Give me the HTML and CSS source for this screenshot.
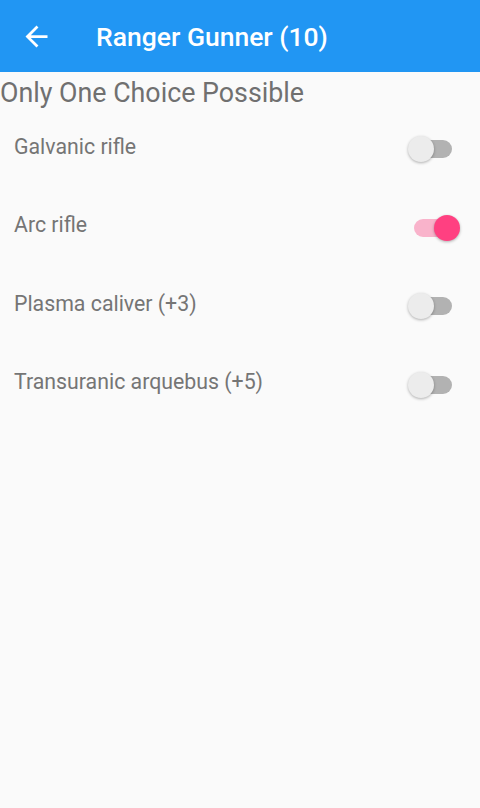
FILE: index.html
```html
<!DOCTYPE html>
<html lang="en">
<head>
  <meta charset="UTF-8" />
  <meta name="viewport" content="width=device-width, initial-scale=1.0" />
  <title>Ranger Gunner (10)</title>
  <link rel="stylesheet" href="styles.css">
</head>
<body>
  <header class="app-bar">
    <button class="back-btn" aria-label="Back">
      <svg viewBox="0 0 24 24" width="33" height="33"><path fill="#fff" d="M20 11H7.83l5.59-5.59L12 4l-8 8 8 8 1.41-1.41L7.83 13H20v-2z"/></svg>
    </button>
    <h1 class="title">Ranger Gunner (10)</h1>
  </header>

  <h2 class="subtitle">Only One Choice Possible</h2>

  <ul class="choices">
    <li class="choice">
      <span class="label">Galvanic rifle</span>
      <span class="switch"><span class="track"></span><span class="thumb"></span></span>
    </li>
    <li class="choice">
      <span class="label">Arc rifle</span>
      <span class="switch on"><span class="track"></span><span class="thumb"></span></span>
    </li>
    <li class="choice">
      <span class="label">Plasma caliver (+3)</span>
      <span class="switch"><span class="track"></span><span class="thumb"></span></span>
    </li>
    <li class="choice">
      <span class="label">Transuranic arquebus (+5)</span>
      <span class="switch"><span class="track"></span><span class="thumb"></span></span>
    </li>
  </ul>
</body>
</html>
```

FILE: styles.css
```css
body {
  margin: 0;
  background-color: #fafafa;
  font-family: Roboto, "Noto Sans", sans-serif;
  color: #757575;
}
.app-bar {
  height: 72px;
  background-color: #2196f3;
  display: flex;
  align-items: center;
  color: #fff;
}
.back-btn {
  width: 33px;
  height: 33px;
  margin-left: 20px;
  padding: 0;
  border: none;
  background: none;
  display: flex;
}
.title {
  margin: 0 0 0 43px;
  font-size: 26.5px;
  font-weight: 500;
}
.subtitle {
  margin: 0;
  padding-top: 5px;
  font-size: 26.8px;
  font-weight: 400;
  line-height: 32px;
  color: #707070;
}
.choices {
  list-style: none;
  margin: 0;
  padding: 0;
}
.choice {
  height: 78.5px;
  display: flex;
  align-items: center;
  justify-content: space-between;
  padding: 0 26px 0 14px;
}
.choice:first-child {
  margin-top: -2px;
}
.label {
  font-size: 21.3px;
}
.switch {
  position: relative;
  width: 46px;
  height: 26px;
  margin-top: 6px;
}
.track {
  position: absolute;
  left: 6px;
  top: 4px;
  width: 38px;
  height: 18px;
  border-radius: 9px;
  background-color: #b2b2b2;
}
.thumb {
  position: absolute;
  left: 0;
  top: 0;
  width: 26px;
  height: 26px;
  border-radius: 50%;
  background-color: #ececec;
  box-shadow: 0 1px 3px rgba(0, 0, 0, 0.3);
}
.switch.on .track {
  background-color: #f9b3cb;
}
.switch.on .thumb {
  left: 26px;
  background-color: #ff4081;
}
```
